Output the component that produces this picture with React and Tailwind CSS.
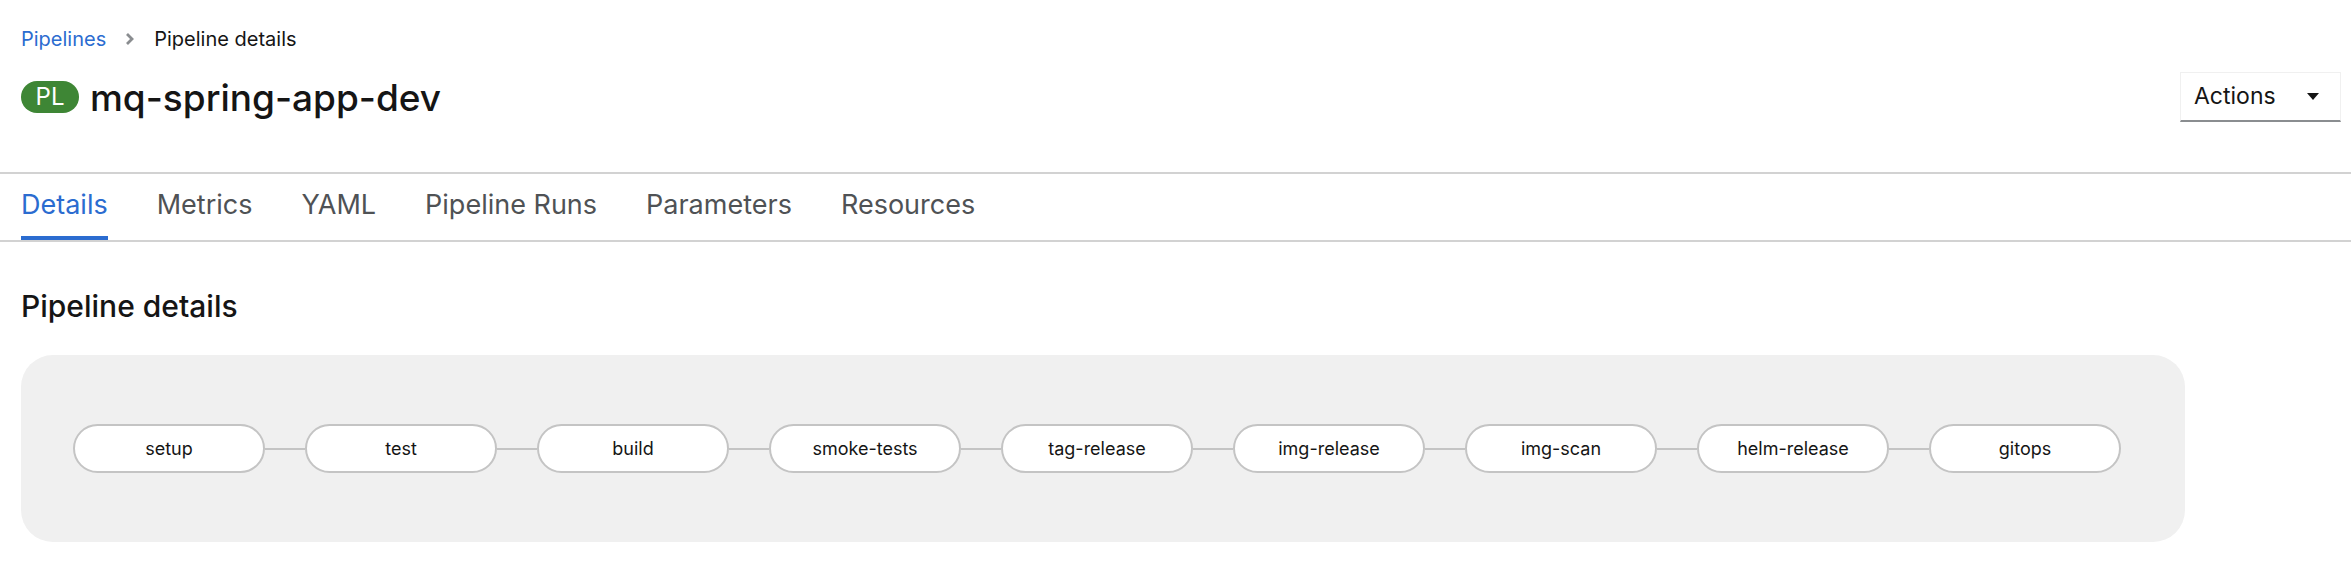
import React from 'react';

const tabs = ['Details', 'Metrics', 'YAML', 'Pipeline Runs', 'Parameters', 'Resources'];
const tasks = ['setup', 'test', 'build', 'smoke-tests', 'tag-release', 'img-release', 'img-scan', 'helm-release', 'gitops'];

export default function App() {
  return (
    <div className="min-h-screen bg-white text-[#151515]" style={{ fontFamily: 'Inter, "Noto Sans", sans-serif' }}>
      {/* header */}
      <div className="pl-[21px] pr-[10px] pt-[24px] pb-[50px]">
        <nav className="flex items-center h-[30px] text-[20px]">
          <span className="text-[#2b6cd0]">Pipelines</span>
          <svg className="mx-[19px] w-[10px] h-[12px]" viewBox="0 0 10 12">
            <path d="M2 1l5 5-5 5" fill="none" stroke="#8a8d90" strokeWidth="2.8" />
          </svg>
          <span>Pipeline details</span>
        </nav>
        <div className="flex items-center justify-between mt-[18px] h-[50px]">
          <div className="flex items-center">
            <span className="flex items-center justify-center w-[58px] h-[32px] rounded-full bg-[#3e8635] text-white text-[24px] leading-none">
              PL
            </span>
            <h1 className="ml-[11px] text-[37px] leading-none font-medium">mq-spring-app-dev</h1>
          </div>
          <button className="flex items-center w-[161px] h-[50px] pl-[13px] border border-[#f0f0f0] border-b-2 border-b-[#8a8d90] text-[23px]">
            Actions
            <svg className="ml-[31px] w-[12px] h-[7px]" viewBox="0 0 12 7">
              <path d="M0 0h12L6 7z" fill="#151515" />
            </svg>
          </button>
        </div>
      </div>

      {/* tabs */}
      <div className="border-t-2 border-b-2 border-[#d2d2d2]">
        <div className="flex gap-[49px] pl-[21px] h-[66px]">
          {tabs.map((t, i) => (
            <div
              key={t}
              className={`flex items-center text-[27px] border-b-4 ${i === 0 ? 'text-[#2b6cd0] border-[#2b6cd0]' : 'text-[#4f5255] border-transparent'}`}
            >
              {t}
            </div>
          ))}
        </div>
      </div>

      {/* content */}
      <div className="px-[21px] pt-[44px]">
        <h2 className="text-[30px] leading-[40px] font-medium">Pipeline details</h2>
        <div className="mt-[29px] w-[2164px] h-[187px] rounded-[32px] bg-[#f0f0f0] flex items-center pl-[52px]">
          {tasks.map((t, i) => (
            <React.Fragment key={t}>
              {i > 0 && <div className="w-[40px] h-[2px] bg-[#c4c4c4]" />}
              <div className="flex items-center justify-center w-[192px] h-[49px] rounded-full bg-white border-2 border-[#c4c4c4] text-[18px]">
                {t}
              </div>
            </React.Fragment>
          ))}
        </div>
      </div>
    </div>
  );
}
